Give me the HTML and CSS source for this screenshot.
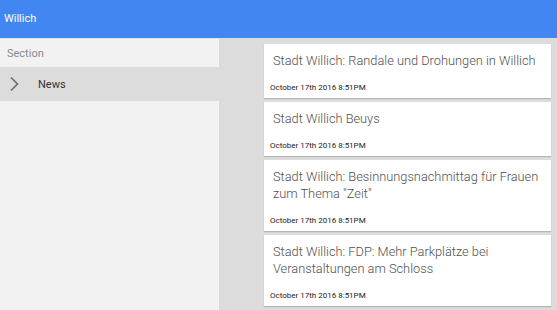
FILE: index.html
```html
<!DOCTYPE html>
<html lang="de">
<head>
    <meta charset="UTF-8">
    <meta name="viewport" content="width=device-width, initial-scale=1.0">
    <title>Willich</title>
    <link rel="stylesheet" href="styles.css">
</head>
<body>
    <div class="app-header">Willich</div>

    <div class="app-body">
        <!-- Seitenleiste -->
        <div class="side-nav">
            <div class="side-section">Section</div>
            <div class="side-item">
                <svg class="side-chevron" width="10" height="16" viewBox="0 0 10 16">
                    <path d="M2 1.5 L8.5 8 L2 14.5" fill="none" stroke="#6a6a6a" stroke-width="1.6"/>
                </svg>
                <span>News</span>
            </div>
        </div>

        <!-- Nachrichtenliste -->
        <div class="news-list">
            <div class="news-card">
                <div class="news-title">Stadt Willich: Randale und Drohungen in Willich</div>
                <div class="news-date">October 17th 2016 8:51PM</div>
            </div>
            <div class="news-card">
                <div class="news-title">Stadt Willich Beuys</div>
                <div class="news-date">October 17th 2016 8:51PM</div>
            </div>
            <div class="news-card">
                <div class="news-title">Stadt Willich: Besinnungsnachmittag für Frauen zum Thema "Zeit"</div>
                <div class="news-date">October 17th 2016 8:51PM</div>
            </div>
            <div class="news-card">
                <div class="news-title">Stadt Willich: FDP: Mehr Parkplätze bei Veranstaltungen am Schloss</div>
                <div class="news-date">October 17th 2016 8:51PM</div>
            </div>
            <div class="news-card news-card-next"></div>
        </div>
    </div>
</body>
</html>
```

FILE: styles.css
```css
*{
    margin: 0;
    padding: 0;
    box-sizing: border-box;
}
html, body{
    height: 100%;
    overflow: hidden;
}
body{
    font-family: Roboto, "Liberation Sans", sans-serif;
    background: #dcdcdc;
}

.app-header{
    height: 38px;
    line-height: 38px;
    padding-left: 4px;
    background: #4286f2;
    color: #ffffff;
    font-size: 11px;
}

.app-body{
    display: flex;
    height: 272px;
}

/* Seitenleiste */
.side-nav{
    width: 219px;
    flex-shrink: 0;
    background: #f2f2f2;
    border-top: 1px solid #e4e4e4;
}
.side-section{
    height: 28px;
    line-height: 29px;
    padding-left: 7px;
    font-size: 11px;
    color: #8a8a8a;
}
.side-item{
    display: flex;
    align-items: center;
    height: 34px;
    padding-left: 9px;
    background: #dcdcdc;
    font-size: 11px;
    color: #333333;
}
.side-chevron{
    margin-right: 19px;
}

/* Karten */
.news-list{
    flex: 1;
    padding: 6px 6px 0 45px;
    overflow: hidden;
}
.news-card{
    background: #ffffff;
    padding: 8px 8px 4px 6px;
    margin-bottom: 4px;
    box-shadow: 0 1px 1px rgba(0, 0, 0, 0.18);
}
.news-card-next{
    height: 40px;
}
.news-title{
    padding-left: 3px;
    font-size: 12.8px;
    line-height: 17px;
    font-weight: 300;
    color: #505050;
}
.news-date{
    margin-top: 13px;
    font-size: 8px;
    line-height: 12px;
    color: #222222;
}
```
